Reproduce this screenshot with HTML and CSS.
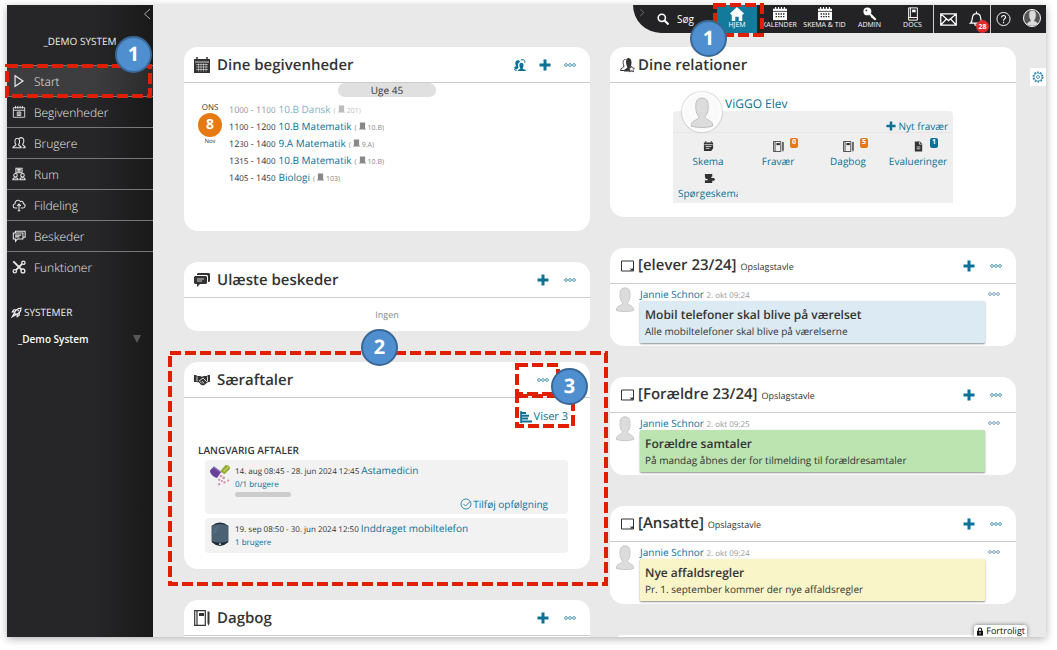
FILE: index.html
```
<!DOCTYPE html>
<html lang="da"><head>
    <meta charset="utf-8">
    <meta name="viewport" content="width=device-width, initial-scale=1">
    <title>ViGGO</title>
    <link rel="stylesheet" href="styles.css">
  </head><body>
  <!-- icons -->
  <svg class="defs" width="0" height="0">
    <symbol id="i-play" viewBox="0 0 16 16"><path d="M3.500 2v12l9-6z" fill="none" stroke="currentColor" stroke-width="1.400"/></symbol>
    <symbol id="i-cal1" viewBox="0 0 16 16"><path d="M1.500 3h13v11h-13zM1.500 6h13M4 1v3M6.600 1v3M9.300 1v3M12 1v3M6 8h4v4H6zM7 10.500h2M8 8v3" fill="none" stroke="currentColor"/></symbol>
    <symbol id="i-users" viewBox="0 0 16 16"><path d="M1 13.500c0-2 3-2 3.500-3.500C2.500 7 3 2.500 6 2.500S9.500 7 7.500 10c.5 1.500 3 1.500 3 3.500zM8 3c3-2.500 6-.5 5.500 3 0 1.500-.7 2.500-1.300 3.500.3 2 2.800 1.500 2.800 4h-3" fill="none" stroke="currentColor" stroke-width="1.200"/></symbol>
    <symbol id="i-room" viewBox="0 0 16 16"><path d="M4.500 1.500h7v5h-7zM6 3h4M6 4.700h4M1 14.500c0-3 6-3 6 0zM9 14.500c0-3 6-3 6 0z" fill="none" stroke="currentColor" stroke-width="1.200"/><circle cx="4" cy="9.500" r="2" fill="none" stroke="currentColor" stroke-width="1.200"/><circle cx="12" cy="9.500" r="2" fill="none" stroke="currentColor" stroke-width="1.200"/></symbol>
    <symbol id="i-cloud" viewBox="0 0 16 16"><path d="M6 11.500H4C.5 11.500.5 7 3.500 6.500 3 3 7.500 1 9.500 4 12 3 13.500 5 13 6.500c3 .5 2.500 5-.5 5H10M8 14.500V7M5.800 9L8 6.800 10.200 9M6.500 14.500h3" fill="none" stroke="currentColor" stroke-width="1.200"/></symbol>
    <symbol id="i-chat" viewBox="0 0 16 16"><path d="M4 4V2.500h11v7h-2M1.500 4.500h11v7H6l-2 2.500v-2.500H1.500zM3.500 7h7M3.500 9h5" fill="none" stroke="currentColor" stroke-width="1.200"/></symbol>
    <symbol id="i-tools" viewBox="0 0 16 16"><path d="M1.500 1.500l9.500 9.500M11.500 4.500L4.500 11.500" stroke="currentColor" stroke-width="2.200"/><circle cx="13" cy="3.200" r="1.900" fill="none" stroke="currentColor" stroke-width="1.500"/><circle cx="3.200" cy="12.800" r="1.900" fill="none" stroke="currentColor" stroke-width="1.500"/><circle cx="12.500" cy="12.500" r="2.200" fill="none" stroke="currentColor" stroke-width="1.500"/></symbol>
    <symbol id="i-rocket" viewBox="0 0 16 16"><path d="M5 9c1-4 4-7 9.500-7.500C14.500 7 11 10 7 11zM5 7H2l2-3h3M9 11v3l3-2V9M4.500 9.500L2 14l4.500-2.500" fill="none" stroke="currentColor" stroke-width="1.800"/><circle cx="10.500" cy="5.500" r="1.200" fill="currentColor"/></symbol>
    <symbol id="i-cal" viewBox="0 0 16 16"><path d="M0 2h16v14H0z" fill="currentColor"/><path d="M2 7.500h12M2 10h12M2 12.500h12M4.500 6.500v8M7 6.500v8M9.500 6.500v8M12 6.500v8" stroke="#fff" stroke-width=".5"/><path d="M1 5h14" stroke="#fff" stroke-width=".8"/><path d="M3 0v3M13 0v3" stroke="currentColor" stroke-width="1.500"/></symbol>
    <symbol id="i-caltop" viewBox="0 0 16 16"><path d="M0 2h16v13H0z" fill="currentColor"/><path d="M0 5h16" stroke="#232325" stroke-width=".9"/><path d="M3 8h10M3 11h10" stroke="#232325" stroke-width="1.600" stroke-dasharray="1.600 1.200"/><path d="M3 0v3M6.300 0v3M9.600 0v3M13 0v3" stroke="currentColor" stroke-width="1.300"/></symbol>
    <symbol id="i-people" viewBox="0 0 16 16"><path d="M5 16c0-2.500 3-2 3.500-3.500C6.500 9.500 6.500 5 9.800 5s3.700 4 1.700 7.500c.5 1.500 4.500 1 4.500 3.500z" fill="currentColor"/><path d="M0 12c0-2 3-1.500 2.800-3C1 6 1.500 1.500 5 1.500c2 0 3 .8 3 2.500-3 1-3 4.500-2 7.500 0 1.500-3 1-3.200 3z" fill="currentColor"/><path d="M9 1h3c2.500 0 3 2 2.200 4M.8 13.500c0 1.500 1 2 2.700 2" stroke="currentColor" stroke-width="1.300" fill="none"/></symbol>
    <symbol id="i-rel" viewBox="0 0 16 16"><path d="M4 14.500c0-3 3-2.500 3.300-4.500C5.500 6 5.500 1 8.500 1s4 5 2 9c.5 1 1.500 1.300 2.500 2v2.500z" fill="currentColor"/><path d="M5.500 2.500C3 2 2.500 6 4 9c0 2-3.500 1.500-3.500 4.500h4" stroke="currentColor" fill="none"/><path d="M11.500 9l1 2 2 .2-1.500 1.400.5 2.200-2-1.100-2 1.100.5-2.200-1.500-1.400 2-.2z" fill="#fff" stroke="currentColor" stroke-width=".8"/></symbol>
    <symbol id="i-plus" viewBox="0 0 12 12"><path d="M4.500.5h3v4h4v3h-4v4h-3v-4h-4v-3h4z" fill="currentColor"/></symbol>
    <symbol id="i-dots" viewBox="0 0 12 4"><g fill="none" stroke="currentColor" stroke-width=".7"><circle cx="2" cy="2" r="1.400"/><circle cx="6" cy="2" r="1.400"/><circle cx="10" cy="2" r="1.400"/></g></symbol>
    <symbol id="i-msgs" viewBox="0 0 16 16"><path d="M4 1h11l1 1v7l-1 1h-1V4l-1-1H3V2z" fill="currentColor"/><path d="M1 4h11l1 1v6l-1 1H6l-3 3v-3H1l-1-1V5z" fill="currentColor"/><path d="M3 7h7M3 9h5" stroke="#fff" stroke-width=".8"/></symbol>
    <symbol id="i-hands" viewBox="0 0 16 16"><path d="M0 3h2l1 1h3l2 .7L10 4h3l1-1h2v7h-2l-4 3.200H8L3 10H0z" fill="currentColor"/><path d="M5 9l4-3 4 4M4 10l2 2M6 9.500l2 2M8 9l2 2.500M3 4.500v5M13.500 4.500v5" stroke="#fff" stroke-width=".8" fill="none"/></symbol>
    <symbol id="i-book" viewBox="0 0 16 16"><path d="M.7.700h10.600v14.600H.7zM3 1v14" fill="none" stroke="currentColor" stroke-width="1.200"/><path d="M5 3h5v3H5z" fill="currentColor"/><path d="M13.500 1.500h2V13l-1 3-1-3z" fill="currentColor"/></symbol>
    <symbol id="i-board" viewBox="0 0 16 16"><path d="M1.500 3h12v10h-12z" fill="none" stroke="currentColor"/><path d="M13 12.500H9.500l1.500-1-1-1.500 2 1 1-1z" fill="currentColor"/></symbol>
    <symbol id="i-task" viewBox="0 0 12 12"><path d="M1 1.500h10V8L9 11H1z" fill="currentColor"/><path d="M1.500 4h9M3 6h6M3 8h4" stroke="#fff" stroke-width=".8"/><path d="M3 0v2M9 0v2" stroke="currentColor"/></symbol>
    <symbol id="i-doc" viewBox="0 0 12 12"><path d="M2 .5h5.500L10 3v8.500H2z" fill="currentColor"/><path d="M4 6.500h4M4 8.500h4M7 1v2.500h2.500" stroke="#fff" stroke-width=".8" fill="none"/></symbol>
    <symbol id="i-form" viewBox="0 0 12 12"><path d="M1 1h8v3H8v1.500h3L12 7l-1 1.500H9V11H1V8h3V6.500H2L1 4z" fill="currentColor"/></symbol>
    <symbol id="i-list" viewBox="0 0 12 12"><path d="M1 0v12" stroke="currentColor" stroke-width="1.600"/><path d="M1 2h5M1 4.700h8M1 7.400h7M1 10.500h11" stroke="currentColor" stroke-width="2"/></symbol>
    <symbol id="i-check" viewBox="0 0 12 12"><circle cx="6" cy="6" r="5" fill="none" stroke="currentColor" stroke-width=".8"/><path d="M3.500 6l2 2L10 3.500" fill="none" stroke="currentColor" stroke-width=".8"/></symbol>
    <symbol id="i-home" viewBox="0 0 16 16"><path d="M8 0l8 7.500-1.500 1.300L14 8.500V16h-4v-5H6v5H2V8.500l-.5.3L0 7.500z" fill="currentColor"/></symbol>
    <symbol id="i-key" viewBox="0 0 16 16"><circle cx="5" cy="5" r="4.500" fill="currentColor"/><circle cx="3.800" cy="3.800" r="1" fill="#232325"/><path d="M7 7l7.500 7.500M11 10l-1.500 2M13 12l-1 2" stroke="currentColor" stroke-width="2.400"/></symbol>
    <symbol id="i-docs" viewBox="0 0 16 16"><path d="M3 1h10v14H3zM3 12h10M5 1v11" fill="none" stroke="currentColor" stroke-width="1.100"/><path d="M7 3h4v3H7z" fill="currentColor"/></symbol>
    <symbol id="i-mail" viewBox="0 0 16 12"><path d="M.7.700h14.600v10.600H.7zL8 7 15.300.7M.7 11.300L6 5.500M15.300 11.300L10 5.500" fill="none" stroke="currentColor" stroke-width="1.200"/></symbol>
    <symbol id="i-bell" viewBox="0 0 16 16"><path d="M1.500 12.500c2.500-2 1.500-5 2.500-7.500C4.500 3 6 2.300 8 2.300S11.500 3 12 5c1 2.500 0 5.500 2.500 7.500zM8 0v2.300M6 13c0 2.500 4 2.500 4 0" fill="none" stroke="currentColor" stroke-width="1.300"/></symbol>
    <symbol id="i-search" viewBox="0 0 12 12"><circle cx="4.800" cy="4.800" r="3.600" fill="none" stroke="currentColor" stroke-width="1.600"/><path d="M7.500 7.500l4 4" stroke="currentColor" stroke-width="2"/></symbol>
    <symbol id="i-help" viewBox="0 0 16 16"><circle cx="8" cy="8" r="7" fill="none" stroke="currentColor"/><path d="M6 6.500c0-3 4.200-3 4.200-.3C10.200 8 8 7.800 8 9.800M8 11v1.400" fill="none" stroke="currentColor" stroke-width="1.200"/></symbol>
    <symbol id="i-gear" viewBox="0 0 12 12"><circle cx="6" cy="6" r="4.900" fill="none" stroke="currentColor" stroke-width="1.100" stroke-dasharray="1.800 1.280"/><circle cx="6" cy="6" r="4" fill="none" stroke="currentColor" stroke-width=".6"/><circle cx="6" cy="6" r="1.500" fill="none" stroke="currentColor" stroke-width=".7"/></symbol>
    <symbol id="i-lock" viewBox="0 0 10 12"><path d="M1 5h8v6.500H1z" fill="currentColor"/><path d="M2.800 5V3.500c0-3 4.400-3 4.400 0V5" fill="none" stroke="currentColor" stroke-width="1.500"/><circle cx="5" cy="8" r="1" fill="#fff"/></symbol>
    <symbol id="i-person" viewBox="0 0 20 26"><path d="M1 24.500C.5 19 7 20 7.500 16.500 4.500 13 4.500 9 5 5c.5-5.500 9.500-5.500 10 0 .5 4 .5 8-2.500 11.500C13 20 19.500 19 19 24.500 14 26 6 26 1 24.500z" fill="#dcdcdc" stroke="#bdbdbd" stroke-width=".8"/></symbol>
    <symbol id="i-room-s" viewBox="0 0 8 8"><path d="M1 0h6v7h1v1H0V7h1z" fill="currentColor"/></symbol>
  </svg>

  <div class="app">
    <aside class="sidebar">
      <button class="collapse" aria-label="Skjul menu"><svg width="8" height="12" viewBox="0 0 8 12"><path d="M7 1L1.500 6 7 11" fill="none" stroke="#aaa"/></svg></button>
      <div class="school">_DEMO SYSTEM</div>
      <nav class="menu">
        <a href="#" class="menu-item active"><svg><use href="#i-play"/></svg>Start
          <svg class="mark mark-start"><rect/></svg><span class="step step-start">1</span></a>
        <a href="#" class="menu-item"><svg><use href="#i-cal1"/></svg>Begivenheder</a>
        <a href="#" class="menu-item"><svg><use href="#i-users"/></svg>Brugere</a>
        <a href="#" class="menu-item"><svg><use href="#i-room"/></svg>Rum</a>
        <a href="#" class="menu-item"><svg><use href="#i-cloud"/></svg>Fildeling</a>
        <a href="#" class="menu-item"><svg><use href="#i-chat"/></svg>Beskeder</a>
        <a href="#" class="menu-item"><svg><use href="#i-tools"/></svg>Funktioner</a>
      </nav>
      <div class="systems"><svg><use href="#i-rocket"/></svg>SYSTEMER</div>
      <button class="system"><span>_Demo System</span><i class="arrow"></i></button>
    </aside>

    <main class="content">
      <div class="column">
        <section class="card events">
          <header class="card-head"><svg class="icon"><use href="#i-cal"/></svg><h2>Dine begivenheder</h2>
            <div class="actions"><button aria-label="Relationer"><svg class="ic12"><use href="#i-people"/></svg></button><button aria-label="Tilføj"><svg class="ic12"><use href="#i-plus"/></svg></button><button aria-label="Mere"><svg class="dots"><use href="#i-dots"/></svg></button></div></header>
          <div class="week">Uge 45</div>
          <div class="day">
            <div class="date"><span>ONS</span><b>8</b><small>Nov</small></div>
            <ul class="lessons">
              <li class="past"><span>10<small>00</small> - 11<small>00</small></span> <a href="#">10.B Dansk</a> <em>(<svg><use href="#i-room-s"/></svg> 201)</em></li>
              <li><span>11<small>00</small> - 12<small>00</small></span> <a href="#">10.B Matematik</a> <em>(<svg><use href="#i-room-s"/></svg> 10.B)</em></li>
              <li><span>12<small>30</small> - 14<small>00</small></span> <a href="#">9.A Matematik</a> <em>(<svg><use href="#i-room-s"/></svg> 9.A)</em></li>
              <li><span>13<small>15</small> - 14<small>00</small></span> <a href="#">10.B Matematik</a> <em>(<svg><use href="#i-room-s"/></svg> 10.B)</em></li>
              <li><span>14<small>05</small> - 14<small>50</small></span> <a href="#">Biologi</a> <em>(<svg><use href="#i-room-s"/></svg> 103)</em></li>
            </ul>
          </div>
        </section>

        <section class="card">
          <header class="card-head"><svg class="icon"><use href="#i-msgs"/></svg><h2>Ulæste beskeder</h2>
            <div class="actions"><button aria-label="Tilføj"><svg class="ic12"><use href="#i-plus"/></svg></button><button aria-label="Mere"><svg class="dots"><use href="#i-dots"/></svg></button></div></header>
          <p class="empty">Ingen</p>
        </section>

        <section class="card deals">
          <header class="card-head"><svg class="icon"><use href="#i-hands"/></svg><h2>Særaftaler</h2>
            <div class="actions"><button aria-label="Mere"><svg class="dots"><use href="#i-dots"/></svg></button></div></header>
          <a href="#" class="showing"><svg class="ic12"><use href="#i-list"/></svg>Viser 3</a>
          <h3>LANGVARIG AFTALER</h3>
          <article class="deal">
            <svg class="deal-icon" viewBox="0 0 24 26"><path d="M1 7l4-4 8 6-4 6C6 15 1 11 1 7z" fill="#67419a"/><path d="M5 3l8 6" stroke="#8c6bbb" stroke-width="1.500"/><path d="M12 8l6-7c3 0 5 1 5 4l-6 6z" fill="#93ab3c"/><path d="M16 8l5-5" stroke="#bdd05c" stroke-width="1.500"/><g fill="#d890b0"><circle cx="13" cy="13" r="1.300"/><circle cx="16" cy="15" r="1.500"/><circle cx="11" cy="17" r="1.300"/><circle cx="14" cy="18.500" r="1.200"/><circle cx="17" cy="20" r="1.300"/><circle cx="11" cy="22" r="1.300"/><circle cx="21" cy="18" r="1.200"/></g></svg>
            <div class="deal-text">
              <div class="deal-title">14. aug 08:45 - 28. jun 2024 12:45 <a href="#">Astamedicin</a></div>
              <a href="#" class="count">0/1 brugere</a>
              <div class="bar"></div>
              <a href="#" class="follow"><svg class="ic12"><use href="#i-check"/></svg>Tilføj opfølgning</a>
            </div>
          </article>
          <article class="deal">
            <svg class="deal-icon" viewBox="0 0 24 26"><path d="M3 4Q12-3 21 4v18q-9 8-18 0z" fill="#202c38"/><path d="M3 4q9-4 18 0v17q-9 3-18 0z" fill="#4b6174"/><path d="M5 9l6-5M5 12l4-3" stroke="#8aa0b0" stroke-width=".8" stroke-dasharray="1 1"/><circle cx="12" cy="24" r="1" fill="#fff"/></svg>
            <div class="deal-text">
              <div class="deal-title">19. sep 08:50 - 30. jun 2024 12:50 <a href="#">Inddraget mobiltelefon</a></div>
              <a href="#" class="count">1 brugere</a>
            </div>
          </article>
          <svg class="mark mark-card"><rect/></svg>
          <svg class="mark mark-more"><rect/></svg>
          <svg class="mark mark-showing"><rect/></svg>
          <span class="step step-card">2</span>
          <span class="step step-more">3</span>
        </section>

        <section class="card">
          <header class="card-head"><svg class="icon"><use href="#i-book"/></svg><h2>Dagbog</h2>
            <div class="actions"><button aria-label="Tilføj"><svg class="ic12"><use href="#i-plus"/></svg></button><button aria-label="Mere"><svg class="dots"><use href="#i-dots"/></svg></button></div></header>
          <p class="empty"></p>
        </section>
      </div>

      <div class="column right">
        <section class="card">
          <header class="card-head"><svg class="icon"><use href="#i-rel"/></svg><h2>Dine relationer</h2></header>
          <div class="relation">
            <a href="#" class="who"><span class="avatar"><svg><use href="#i-person"/></svg></span>ViGGO Elev</a>
            <div class="panel">
              <a href="#" class="absence"><svg><use href="#i-plus"/></svg>Nyt fravær</a>
              <div class="links">
                <div><a href="#"><svg><use href="#i-task"/></svg>Skema</a></div>
                <div><a href="#"><svg><use href="#i-book"/></svg>Fravær</a><b class="badge">0</b></div>
                <div><a href="#"><svg><use href="#i-book"/></svg>Dagbog</a><b class="badge">5</b></div>
                <div><a href="#"><svg><use href="#i-doc"/></svg>Evalueringer</a><b class="badge blue">1</b></div>
                <div><a href="#"><svg><use href="#i-form"/></svg>Spørgeskema</a></div>
              </div>
            </div>
          </div>
        </section>

        <section class="card">
          <header class="card-head"><svg class="icon"><use href="#i-board"/></svg><h2>[elever 23/24] <small>Opslagstavle</small></h2>
            <div class="actions"><button aria-label="Tilføj"><svg class="ic12"><use href="#i-plus"/></svg></button><button aria-label="Mere"><svg class="dots"><use href="#i-dots"/></svg></button></div></header>
          <article class="post">
            <svg class="face"><use href="#i-person"/></svg>
            <div class="post-main">
              <div class="byline"><a href="#">Jannie Schnor</a> <time>2. okt 09:24</time></div>
              <div class="note blue"><h4>Mobil telefoner skal blive på værelset</h4><p>Alle mobiltelefoner skal blive på værelserne</p></div>
            </div>
            <button class="post-more" aria-label="Mere"><svg class="dots"><use href="#i-dots"/></svg></button>
          </article>
        </section>

        <section class="card">
          <header class="card-head"><svg class="icon"><use href="#i-board"/></svg><h2>[Forældre 23/24] <small>Opslagstavle</small></h2>
            <div class="actions"><button aria-label="Tilføj"><svg class="ic12"><use href="#i-plus"/></svg></button><button aria-label="Mere"><svg class="dots"><use href="#i-dots"/></svg></button></div></header>
          <article class="post">
            <svg class="face"><use href="#i-person"/></svg>
            <div class="post-main">
              <div class="byline"><a href="#">Jannie Schnor</a> <time>2. okt 09:25</time></div>
              <div class="note green"><h4>Forældre samtaler</h4><p>På mandag åbnes der for tilmelding til forældresamtaler</p></div>
            </div>
            <button class="post-more" aria-label="Mere"><svg class="dots"><use href="#i-dots"/></svg></button>
          </article>
        </section>

        <section class="card">
          <header class="card-head"><svg class="icon"><use href="#i-board"/></svg><h2>[Ansatte] <small>Opslagstavle</small></h2>
            <div class="actions"><button aria-label="Tilføj"><svg class="ic12"><use href="#i-plus"/></svg></button><button aria-label="Mere"><svg class="dots"><use href="#i-dots"/></svg></button></div></header>
          <article class="post">
            <svg class="face"><use href="#i-person"/></svg>
            <div class="post-main">
              <div class="byline"><a href="#">Jannie Schnor</a> <time>2. okt 09:24</time></div>
              <div class="note yellow"><h4>Nye affaldsregler</h4><p>Pr. 1. september kommer der nye affaldsregler</p></div>
            </div>
            <button class="post-more" aria-label="Mere"><svg class="dots"><use href="#i-dots"/></svg></button>
          </article>
        </section>

        <section class="card"><p class="empty"></p></section>
      </div>
      <button class="settings" aria-label="Indstillinger"><svg class="ic12"><use href="#i-gear"/></svg></button>
      <div class="private"><svg><use href="#i-lock"/></svg>Fortroligt</div>
    </main>

    <div class="topbar">
      <svg class="chev" viewBox="0 0 6 10"><path d="M1 1l4 4-4 4" fill="none" stroke="#777"/></svg>
      <label class="search"><svg class="ic12"><use href="#i-search"/></svg><input type="text" placeholder="Søg" aria-label="Søg"></label>
      <nav class="tabs">
        <a href="#" class="tab current"><svg><use href="#i-home"/></svg>HJEM
          <svg class="mark mark-home"><rect/></svg><span class="step step-home">1</span></a>
        <a href="#" class="tab"><svg><use href="#i-caltop"/></svg>KALENDER</a>
        <a href="#" class="tab"><svg><use href="#i-caltop"/></svg>SKEMA &amp; TID</a>
        <a href="#" class="tab"><svg><use href="#i-key"/></svg>ADMIN</a>
        <a href="#" class="tab"><svg><use href="#i-docs"/></svg>DOCS</a>
      </nav>
      <div class="inbox">
        <button aria-label="Beskeder"><svg class="mail"><use href="#i-mail"/></svg></button>
        <button aria-label="Notifikationer"><svg><use href="#i-bell"/></svg><b>28</b></button>
      </div>
      <div class="account">
        <button aria-label="Hjælp"><svg><use href="#i-help"/></svg></button>
        <button class="me" aria-label="Profil"><svg><use href="#i-person"/></svg></button>
      </div>
    </div>
  </div>
  </body></html>
```
FILE: styles.css
```
* {box-sizing: border-box;}
body {margin: 0; padding: 5px 11px 13px 7px; height: 100vh; background: #fff; font-family: "Open Sans", "Noto Sans", sans-serif; font-size: 11px; color: #333; text-rendering: geometricPrecision;}
h2, h3, h4, p, ul {margin: 0; padding: 0;}
a {color: #0b7195; text-decoration: none;}
button {border: 0; padding: 0; background: none; font: inherit; color: #0b7195; cursor: pointer;}
svg {display: block; flex: none;}
.defs {position: absolute;}
.ic12 {width: 12px; height: 12px;}
.dots {width: 12px; height: 4px;}

.app {position: relative; display: flex; height: 100%; background: #e9e9e9; box-shadow: 0 2px 8px rgba(0,0,0,.3);}

/* left menu */
.sidebar {flex: none; width: 146px; background: linear-gradient(to right, #262628 60%, #19191a); color: #eee;}
.collapse {display: block; margin: 3px 2px 0 auto;}
.collapse svg {height: 12px;}
.school {margin-top: 13px; height: 32px; line-height: 16px; text-align: center; font-size: 10px;}
.menu-item {position: relative; display: flex; align-items: center; height: 31px; padding-left: 5px; gap: 8px; border-top: 1px solid #77777a; color: #e8e8e8; font-size: 12px; font-weight: 300;}
.menu-item > svg:first-child {width: 14px; height: 14px;}
.menu-item.active {background: linear-gradient(to right, #3d3d3f 60%, #2a2a2b); z-index: 2;}
.systems {display: flex; align-items: center; gap: 2px; margin-top: 20px; padding-left: 4px; height: 20px; font-size: 10px;}
.systems svg {width: 11px; height: 11px;}
.system {display: flex; align-items: center; justify-content: space-between; width: 100%; height: 20px; margin-top: 7px; padding: 0 12px 0 11px; color: #fff; font-size: 10px; font-weight: 600;}
.arrow {border: 4px solid transparent; border-top: 8px solid #58585a; border-bottom: 0;}

/* cards */
.content {position: relative; flex: 1; display: grid; grid-template-columns: 1fr 1fr; align-items: start; gap: 20px; padding: 42px 30px 0 31px; overflow: hidden;}
.column {display: grid; gap: 31px; min-width: 0;}
.card {position: relative; background: #fff; border-radius: 14px; min-width: 0;}
.card-head {display: flex; align-items: center; gap: 7px; height: 36px; padding: 0 14px 0 10px; border-bottom: 1px solid #ccc;}
.right .card-head {gap: 2px;}
.icon {width: 16px; height: 16px; color: #333;}
.card-head h2 {font-size: 15px; font-weight: 600; line-height: 20px; white-space: nowrap;}
.card-head h2 small {font-size: 9px; font-weight: 400;}
.actions {display: flex; align-items: center; gap: 15px; margin-left: auto;}
.empty {height: 33px; line-height: 33px; text-align: center; font-size: 9px; color: #888;}

.events {min-height: 184px;}
.events .actions {gap: 13px;}
.week {width: 98px; height: 14px; margin: 0 auto; background: #e0e0e0; border-radius: 7px; line-height: 14px; text-align: center; font-size: 10px;}
.day {display: flex; gap: 7px; padding: 4px 0 0 14px;}
.date {display: flex; flex-direction: column; align-items: center; width: 24px; padding-top: 1px; font-size: 8px; line-height: 11px;}
.date b {width: 24px; height: 24px; border-radius: 50%; background: #e67a12; color: #fff; text-align: center; font-size: 14px; line-height: 24px;}
.date small {font-size: 6px; line-height: 9px;}
.lessons {list-style: none; line-height: 17px; font-size: 10px;}
.lessons li {display: flex; align-items: baseline; gap: 3px; height: 17px;}
.lessons span {font-size: 9px;}
.lessons small {font-size: 8px;}
.lessons em {display: flex; align-items: baseline; gap: 2px; font-style: normal; font-size: 7px; color: #888;}
.lessons em svg {width: 7px; height: 8px;}
.past {opacity: .55;}

/* agreements */
.deals {padding-bottom: 16px;}
.deals .card-head {padding-right: 41px;}
.showing {display: flex; gap: 2px; align-items: center; justify-content: flex-end; padding: 11px 22px 0 0; line-height: 16px;}
.deals h3 {margin: 17px 0 2px 14px; font-size: 10px; font-weight: 600; line-height: 16px;}
.deal {display: flex; gap: 4px; margin: 0 22px 4px 21px; padding: 3px 20px 3px 4px; border-radius: 4px; background: #f2f2f2; font-size: 8px;}
.deals .deal:last-of-type {margin-bottom: 0;}
.deal-icon {width: 22px; height: 26px;}
.deal-text {flex: 1; line-height: 15px;}
.deal-title {height: 15px;}
.deal-title a {font-size: 10px;}
.count {display: block; line-height: 14px;}
.bar {width: 56px; height: 5px; border-radius: 3px; background: #ccc;}
.follow {display: flex; justify-content: flex-end; align-items: center; gap: 1px; height: 14px; font-size: 10px;}

/* relations */
.relation {width: 280px; margin: 0 auto; padding: 13px 0 14px;}
.who {position: relative; display: flex; align-items: center; height: 15px; padding-left: 52px; font-size: 12px;}
.avatar {position: absolute; left: 9px; top: -4px; width: 40px; height: 40px; padding: 3px 6px; border-radius: 50%; border: 2px solid #fff; background: #fafafa; box-shadow: 0 0 2px #999;}
.avatar svg {width: 24px; height: 31px;}
.panel {border-radius: 4px 4px 0 0; background: #efefef;}
.absence {display: flex; align-items: center; justify-content: flex-end; gap: 3px; height: 22px; padding: 8px 5px 0 0; border-bottom: 1px solid #e6e6e6; font-size: 10px;}
.absence svg {width: 10px; height: 10px;}
.links {display: grid; grid-template-columns: repeat(4, 1fr); grid-auto-rows: 32px; padding: 5px 0 1px;}
.links div {position: relative; width: 60px; margin-left: 5px; padding-top: 3px; overflow: hidden;}
.links a {display: flex; flex-direction: column; align-items: center; gap: 2px; width: max-content; min-width: 100%; font-size: 10px; line-height: 14px;}
.links svg {width: 11px; height: 11px; color: #333;}
.badge {position: absolute; left: 42px; top: 0; width: 8px; height: 10px; border-radius: 2px; background: #e67a12; color: #fff; font-size: 7px; line-height: 10px; text-align: center;}
.badge.blue {background: #0b7195;}

/* notice boards */
.post {display: flex; padding: 3px 16px 3px 5px;}
.face {width: 20px; height: 25px; margin-right: 5px;}
.post-main {flex: 1;}
.byline {height: 14px; line-height: 14px; font-size: 10px;}
.byline time {font-size: 8px; color: #999;}
.note {padding: 6px 5px 4px; border-radius: 1px; box-shadow: 0 1px 2px rgba(0,0,0,.45);}
.note h4 {font-size: 12px; font-weight: 600; line-height: 16px;}
.note p {font-size: 10px; line-height: 16px;}
.note.blue {background: #dceaf4;}
.note.green {background: #bbe4b1;}
.note.yellow {background: #f9f5c9;}
.post-more {align-self: flex-start; margin: 5px 0 0 3px; color: #4a7fa5;}

.settings {position: absolute; right: 0; top: 63px; width: 16px; height: 18px; padding: 2px; background: #fff;}
.private {position: absolute; right: 19px; bottom: 0; display: flex; align-items: center; gap: 2px; height: 12px; padding: 0 2px; border-radius: 3px 3px 0 0; background: #fff; box-shadow: 0 0 4px #777; color: #111; font-size: 9px; line-height: 12px;}
.private svg {width: 8px; height: 9px;}

/* top menu lies over the content */
.topbar {position: absolute; top: 0; right: 0; display: flex; height: 28px; padding-left: 6px; border-radius: 0 0 0 28px; background: #232325; color: #fff; z-index: 3;}
.chev {width: 6px; height: 9px; margin-top: 3px;}
.search {display: flex; align-items: center; gap: 8px; width: 72px; padding-left: 12px;}
.search input {width: 32px; padding: 0; border: 0; background: none; color: #fff; font: inherit; font-size: 10px;}
.search input::placeholder {color: #fff; opacity: 1;}
.tabs {display: flex;}
.tab {position: relative; display: flex; flex-direction: column; align-items: center; width: 45px; padding-top: 2px; color: #fff; font-size: 7px; line-height: 9px; white-space: nowrap;}
.tab:last-child {width: 41px;}
.tab > svg:first-child {width: 14px; height: 14px;}
.tab.current {width: 40px; background: #147a9c;}
.inbox, .account {display: flex; border-left: 1px solid #ccc;}
.inbox button, .account button {position: relative; display: flex; align-items: center; justify-content: center; width: 28px; color: #fff;}
.inbox svg, .account svg {width: 15px; height: 16px;}
.inbox .mail {width: 17px; height: 13px;}
.inbox b {position: absolute; right: 1px; top: 15px; width: 13px; height: 13px; border-radius: 50%; background: #e02b2b; font-size: 7px; line-height: 13px; text-align: center;}
.account button {width: 24px;}
.account .me {width: 18px; height: 18px; margin: 4px 5px 0 8px; border: 1px solid #fff; border-radius: 50%; overflow: hidden; background: #555;}

/* walkthrough marks */
.mark {position: absolute; overflow: visible; z-index: 4; pointer-events: none;}
.mark rect {x: 2px; y: 2px; width: calc(100% - 4px); height: calc(100% - 4px); fill: none; stroke: #e01f00; stroke-width: 4px; stroke-dasharray: 11px 4px;}
.mark-start {left: -2px; top: -2px; width: 147px; height: 34px;}
.mark-home {left: -4px; top: -2px; width: 51px; height: 34px;}
.mark-card {left: -16px; top: -11px; width: calc(100% + 34px); height: calc(100% + 28px);}
.mark-more {right: 30px; top: 1px; width: 45px; height: 33px;}
.mark-showing {right: 15px; top: 32px; width: 60px; height: 34px;}
.step {position: absolute; width: 37px; height: 37px; border: 2px solid #3a6896; border-radius: 50%; background: #4f8fd0; color: #fff; font-size: 20px; font-weight: 700; line-height: 32px; text-align: center; z-index: 5;}
.step-start {right: 1px; top: -30px;}
.step-home {left: -27px; top: 15px;}
.step-card {left: calc(50% - 26px); top: -33px;}
.step-more {right: 2px; top: 6px;}
```
